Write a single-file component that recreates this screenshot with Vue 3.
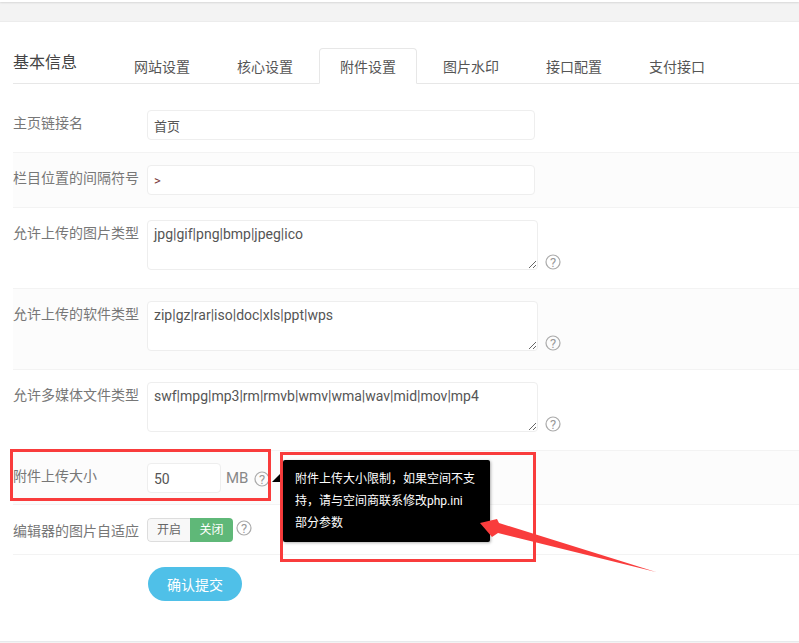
<script setup>
const tabs = [
  { name: '网站设置' },
  { name: '核心设置' },
  { name: '附件设置', active: true },
  { name: '图片水印' },
  { name: '接口配置' },
  { name: '支付接口' }
]
const areas = [
  { label: '允许上传的图片类型', value: 'jpg|gif|png|bmp|jpeg|ico', striped: false },
  { label: '允许上传的软件类型', value: 'zip|gz|rar|iso|doc|xls|ppt|wps', striped: true },
  { label: '允许多媒体文件类型', value: 'swf|mpg|mp3|rm|rmvb|wmv|wma|wav|mid|mov|mp4', striped: false }
]
</script>

<template>
  <div class="page">
    <div class="band"></div>
    <main class="panel">
      <div class="head">
        <h2 class="title">基本信息</h2>
        <nav class="tabs">
          <a v-for="t in tabs" :key="t.name" class="tab" :class="{ active: t.active }">{{ t.name }}</a>
        </nav>
      </div>

      <div class="row r1">
        <label class="lab">主页链接名</label>
        <input class="inp wide" value="首页" />
      </div>
      <div class="row r2 striped">
        <label class="lab">栏目位置的间隔符号</label>
        <input class="inp wide sep" value=">" />
      </div>
      <div v-for="a in areas" :key="a.label" class="row r3" :class="{ striped: a.striped }">
        <label class="lab">{{ a.label }}</label>
        <textarea class="area" :value="a.value"></textarea>
        <svg class="help low" viewBox="0 0 16 16"><circle cx="8" cy="8" r="7" /><text x="8" y="12.5" text-anchor="middle">?</text></svg>
      </div>
      <div class="row r6 striped">
        <label class="lab">附件上传大小</label>
        <input class="inp small" value="50" />
        <span class="unit">MB</span>
        <svg class="help" viewBox="0 0 16 16"><circle cx="8" cy="8" r="7" /><text x="8" y="12.5" text-anchor="middle">?</text></svg>
      </div>
      <div class="row r7">
        <label class="lab">编辑器的图片自适应</label>
        <div class="toggle"><span class="off">开启</span><span class="on">关闭</span></div>
        <svg class="help" viewBox="0 0 16 16"><circle cx="8" cy="8" r="7" /><text x="8" y="12.5" text-anchor="middle">?</text></svg>
      </div>
      <div class="actions"><button class="submit">确认提交</button></div>
    </main>

    <div class="mark mark-a"></div>
    <div class="mark mark-b"></div>
    <div class="tip">
      <i class="caret"></i>
      附件上传大小限制，如果空间不支<br />持，请与空间商联系修改php.ini<br />部分参数
    </div>
    <svg class="arrow" width="799" height="643" viewBox="0 0 799 643">
      <polygon points="480,523 497,519 499,523 656,572 498,533 492,537" fill="#f93c3c" />
    </svg>
  </div>
</template>

<style>
html, body { margin: 0; background: #fff; }
</style>

<style scoped>
.page {
  position: relative;
  width: 799px;
  height: 643px;
  overflow: hidden;
  background: #f3f3f3;
  padding-top: 2px;
  box-sizing: border-box;
  font-family: Roboto, "Noto Sans CJK SC", sans-serif;
  color: #676a6c;
  font-size: 13px;
}
.page::before {
  content: "";
  position: absolute;
  left: 0; right: 0; top: 0;
  height: 2px;
  background: #fff;
  box-shadow: 0 1px 2px rgba(0,0,0,.12);
}
.band { height: 20px; }
.panel {
  height: 619px;
  background: #fff;
  border-bottom: 1px solid #e7eaec;
  box-sizing: content-box;
  padding-left: 13px;
  box-shadow: 0 -1px 0 #ececec;
}
.head {
  display: flex;
  height: 62px;
  box-sizing: border-box;
  padding-top: 26px;
  border-bottom: 1px solid #e7e7e7;
  position: relative;
}
.title {
  margin: 1px 36px 0 0;
  width: 64px;
  font-size: 16px;
  font-weight: 400;
  line-height: 28px;
  color: #444;
}
.tabs { display: flex; gap: 5px; }
.tab {
  width: 98px;
  height: 35px;
  box-sizing: border-box;
  padding: 8px 0 0 20px;
  border: 1px solid transparent;
  border-radius: 4px 4px 0 0;
  font-size: 14px;
  line-height: 20px;
  color: #555;
}
.tab.active {
  height: 36px;
  background: #fff;
  border-color: #e7e7e7;
  border-bottom-color: #fff;
}
.row {
  display: flex;
  align-items: flex-start;
  box-sizing: border-box;
  border-bottom: 1px solid #f3f3f3;
}
.striped { background: #fcfcfc; }
.r1 { height: 69px; padding-top: 26px; }
.r2 { height: 55px; padding-top: 12px; }
.r3 { height: 81px; padding-top: 12px; }
.r6 { height: 54px; padding-top: 12px; }
.r7 { height: 50px; padding-top: 13px; }
.lab {
  width: 134px;
  flex: none;
  font-size: 14px;
  line-height: 18px;
  color: #777;
  margin-top: 4px;
  white-space: nowrap;
}
.inp, .area {
  box-sizing: border-box;
  border: 1px solid #eee;
  border-radius: 4px;
  background: #fff;
  color: #555;
  font: 13px Roboto, "Noto Sans CJK SC", sans-serif;
  padding: 6px;
  margin: 0;
  outline: none;
}
.wide { width: 388px; height: 30px; }
.sep { color: #7a3b3b; }
.small { width: 74px; height: 30px; font-size: 14px; padding: 7px 6px 5px; }
.area { width: 391px; height: 50px; line-height: 20px; padding: 3px 6px; font-size: 14px; display: block; }
.unit { margin: 5px 0 0 5px; font-size: 15px; line-height: 20px; color: #888; }
.help { width: 16px; height: 16px; margin-left: 6px; flex: none; }
.help.low { margin-top: 34px; margin-left: 7px; }
.r6 .help { margin-top: 8px; }
.r7 .help { margin-top: 2px; margin-left: 3px; }
.help circle { fill: none; stroke: #aaa; stroke-width: 1.2; }
.help text { fill: #999; font: 13px Roboto, sans-serif; }
.toggle {
  display: flex;
  width: 86px;
  height: 24px;
  border-radius: 4px;
  overflow: hidden;
  font-size: 12px;
  line-height: 22px;
  text-align: center;
}
.off {
  width: 43px;
  box-sizing: border-box;
  background: #f8f8f8;
  border: 1px solid #ddd;
  border-right: 0;
  border-radius: 4px 0 0 4px;
  color: #666;
}
.on { width: 43px; background: #5fb878; color: #fff; line-height: 24px; }
.actions { padding: 12px 0 0 135px; }
.submit {
  display: block;
  width: 94px;
  height: 34px;
  border: 0;
  border-radius: 17px;
  background: #4fc0e8;
  color: #fff;
  font: 14px Roboto, "Noto Sans CJK SC", sans-serif;
  padding: 0;
}
.mark {
  position: absolute;
  box-sizing: border-box;
  border: 3px solid #f93c3c;
}
.mark-a { left: 10px; top: 449px; width: 261px; height: 52px; }
.mark-b { left: 280px; top: 452px; width: 256px; height: 110px; }
.tip {
  position: absolute;
  left: 283px;
  top: 460px;
  width: 207px;
  height: 82px;
  box-sizing: border-box;
  padding: 8px 10px 0 12px;
  background: #000;
  border-radius: 2px;
  color: #fff;
  font-size: 12px;
  line-height: 22px;
  box-shadow: 1px 1px 3px rgba(0,0,0,.3);
}
.caret {
  position: absolute;
  left: -11px;
  top: 14px;
  width: 0;
  height: 0;
  border-style: solid;
  border-width: 0 0 8px 8px;
  border-color: transparent transparent #000 transparent;
}
.arrow { position: absolute; left: 0; top: 0; pointer-events: none; }
</style>
